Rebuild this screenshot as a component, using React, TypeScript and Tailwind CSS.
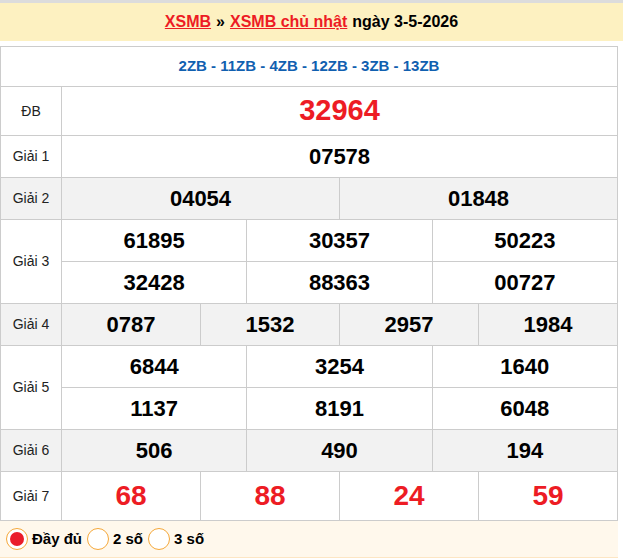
import React from "react";

/* Bảng kết quả XSMB - chủ nhật 3-5-2026 */

type Row = {
  label: string;
  groups: string[][]; // mỗi dòng con là một mảng số
  shaded?: boolean;
  red?: boolean;
  size?: string;
};

const rows: Row[] = [
  { label: "Giải 1", groups: [["07578"]] },
  { label: "Giải 2", groups: [["04054", "01848"]], shaded: true },
  {
    label: "Giải 3",
    groups: [
      ["61895", "30357", "50223"],
      ["32428", "88363", "00727"],
    ],
  },
  { label: "Giải 4", groups: [["0787", "1532", "2957", "1984"]], shaded: true },
  {
    label: "Giải 5",
    groups: [
      ["6844", "3254", "1640"],
      ["1137", "8191", "6048"],
    ],
  },
  { label: "Giải 6", groups: [["506", "490", "194"]], shaded: true },
  { label: "Giải 7", groups: [["68", "88", "24", "59"]], red: true },
];

const font = { fontFamily: '"Liberation Sans", Arial, sans-serif' };

function Radio({ checked, label }: { checked?: boolean; label: string }) {
  return (
    <label className="flex items-center gap-[4px] text-[15px] font-bold text-black">
      <span className="flex h-[22px] w-[22px] items-center justify-center rounded-full border border-[#f5a83a] bg-white">
        {checked && <span className="h-[14px] w-[14px] rounded-full bg-[#ea1c2a]" />}
      </span>
      {label}
    </label>
  );
}

export default function App() {
  return (
    <div className="w-[623px] bg-white" style={font}>
      {/* TIÊU ĐỀ */}
      <div className="h-[3px] bg-[#dcdcdc]" />
      <div className="flex h-[38px] items-center justify-center bg-[#fdf1c1] text-[16px] font-bold text-black">
        <a className="text-[#ed1c24] underline">XSMB</a>
        <span className="mx-[5px]">»</span>
        <a className="text-[#ed1c24] underline">XSMB chủ nhật</a>
        <span className="ml-[5px]">ngày 3-5-2026</span>
      </div>

      {/* BẢNG */}
      <table className="mt-[5px] w-[618px] table-fixed border-collapse">
        <colgroup>
          <col className="w-[61px]" />
          <col />
        </colgroup>
        <tbody>
          <tr>
            <td
              colSpan={2}
              className="h-[40px] border border-[#cccccc] text-center text-[15px] font-bold text-[#1160b0]"
            >
              2ZB - 11ZB - 4ZB - 12ZB - 3ZB - 13ZB
            </td>
          </tr>
          <tr>
            <td className="h-[49px] border border-[#cccccc] text-center text-[14px] text-[#222]">ĐB</td>
            <td className="border border-[#cccccc] text-center text-[29px] font-bold text-[#ed1c24]">
              32964
            </td>
          </tr>
          {rows.map((row) =>
            row.groups.map((nums, gi) => (
              <tr key={row.label + gi} className={row.shaded ? "bg-[#f2f2f2]" : ""}>
                {gi === 0 && (
                  <td
                    rowSpan={row.groups.length}
                    className="border border-[#cccccc] text-center text-[14px] text-[#222]"
                  >
                    {row.label}
                  </td>
                )}
                <td className="border border-[#cccccc] p-0">
                  <div className={`flex ${row.red ? "h-[48px]" : "h-[41px]"}`}>
                    {nums.map((n, i) => (
                      <div
                        key={i}
                        className={`flex flex-1 items-center justify-center font-bold ${
                          i > 0 ? "border-l border-[#cccccc]" : ""
                        } ${row.red ? "text-[28px] text-[#ed1c24]" : "text-[22px] text-black"}`}
                      >
                        {n}
                      </div>
                    ))}
                  </div>
                </td>
              </tr>
            ))
          )}
        </tbody>
      </table>

      {/* LỰA CHỌN HIỂN THỊ */}
      <div className="flex h-[37px] w-[618px] items-center gap-[5px] border-b border-[#fde6c4] bg-[#fff8ec] px-[6px]">
        <Radio checked label="Đầy đủ" />
        <Radio label="2 số" />
        <Radio label="3 số" />
      </div>
    </div>
  );
}
